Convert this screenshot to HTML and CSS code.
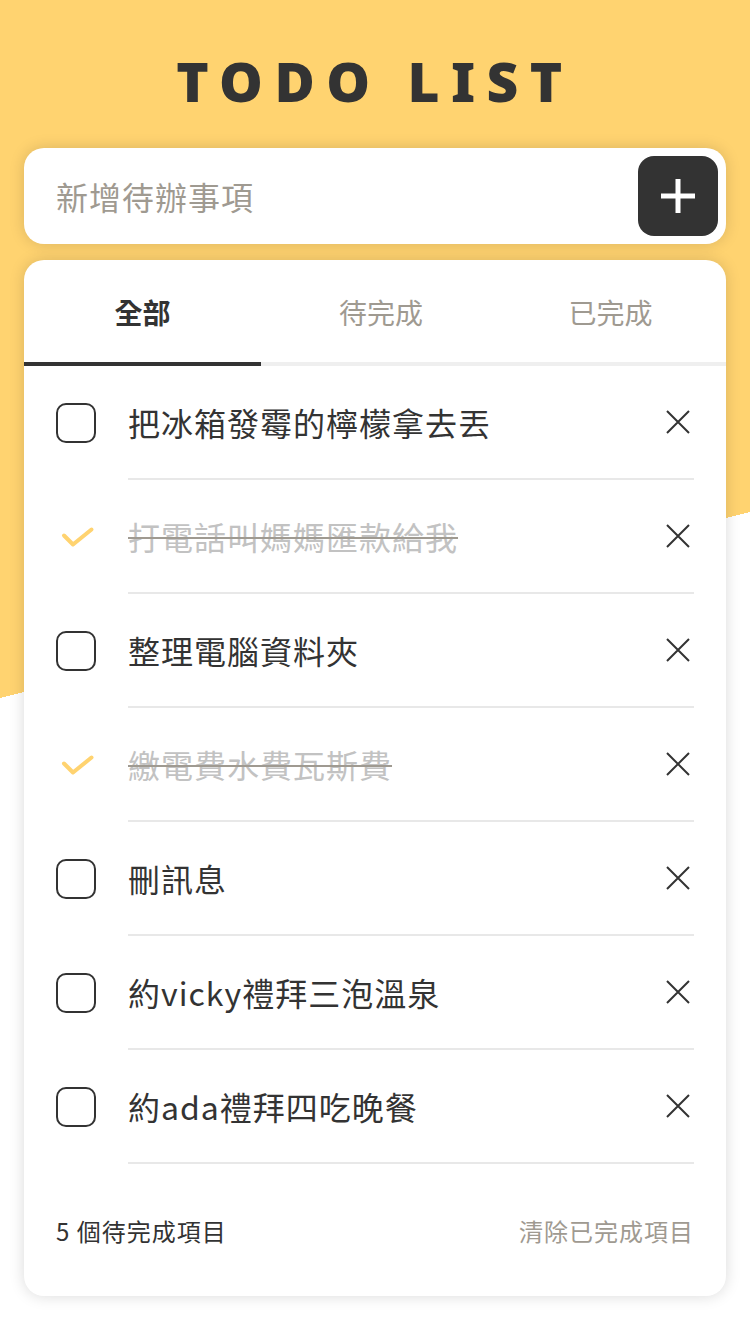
FILE: index.html
```html
<!DOCTYPE html>
<html lang="zh-Hant">
<head>
<meta charset="utf-8">
<title>TODO LIST</title>
<link rel="stylesheet" href="styles.css">
</head>
<body>
<div class="page">
  <header class="header">
    <h1 class="title">TODO LIST</h1>
  </header>
  <main class="content">
    <form class="add-bar">
      <input class="add-input" type="text" placeholder="新增待辦事項">
      <button class="add-btn" type="button" aria-label="新增">
        <svg width="34" height="34" viewBox="0 0 34 34"><path d="M17 0V34M0 17H34" stroke="#fff" stroke-width="5" fill="none"/></svg>
      </button>
    </form>
    <section class="card">
      <ul class="tabs">
        <li class="tab tab-active">全部</li>
        <li class="tab tab-mid">待完成</li>
        <li class="tab tab-last">已完成</li>
      </ul>
      <ul class="list">
        <li class="item">
          <span class="box"></span>
          <div class="item-body"><span class="item-text">把冰箱發霉的檸檬拿去丟</span><button class="del" type="button" aria-label="刪除"><svg width="24" height="24" viewBox="0 0 24 24"><path d="M1 1L23 23M23 1L1 23" stroke="#333" stroke-width="2" fill="none"/></svg></button></div>
        </li>
        <li class="item item-done">
          <span class="box"><svg width="40" height="40" viewBox="0 0 40 40"><path d="M8 18.5L17 27.5L35.5 12.5" stroke="#FFD370" stroke-width="4" fill="none" stroke-linecap="round" stroke-linejoin="round"/></svg></span>
          <div class="item-body"><span class="item-text">打電話叫媽媽匯款給我</span><button class="del" type="button" aria-label="刪除"><svg width="24" height="24" viewBox="0 0 24 24"><path d="M1 1L23 23M23 1L1 23" stroke="#333" stroke-width="2" fill="none"/></svg></button></div>
        </li>
        <li class="item">
          <span class="box"></span>
          <div class="item-body"><span class="item-text">整理電腦資料夾</span><button class="del" type="button" aria-label="刪除"><svg width="24" height="24" viewBox="0 0 24 24"><path d="M1 1L23 23M23 1L1 23" stroke="#333" stroke-width="2" fill="none"/></svg></button></div>
        </li>
        <li class="item item-done">
          <span class="box"><svg width="40" height="40" viewBox="0 0 40 40"><path d="M8 18.5L17 27.5L35.5 12.5" stroke="#FFD370" stroke-width="4" fill="none" stroke-linecap="round" stroke-linejoin="round"/></svg></span>
          <div class="item-body"><span class="item-text">繳電費水費瓦斯費</span><button class="del" type="button" aria-label="刪除"><svg width="24" height="24" viewBox="0 0 24 24"><path d="M1 1L23 23M23 1L1 23" stroke="#333" stroke-width="2" fill="none"/></svg></button></div>
        </li>
        <li class="item">
          <span class="box"></span>
          <div class="item-body"><span class="item-text">刪訊息</span><button class="del" type="button" aria-label="刪除"><svg width="24" height="24" viewBox="0 0 24 24"><path d="M1 1L23 23M23 1L1 23" stroke="#333" stroke-width="2" fill="none"/></svg></button></div>
        </li>
        <li class="item">
          <span class="box"></span>
          <div class="item-body"><span class="item-text">約vicky禮拜三泡溫泉</span><button class="del" type="button" aria-label="刪除"><svg width="24" height="24" viewBox="0 0 24 24"><path d="M1 1L23 23M23 1L1 23" stroke="#333" stroke-width="2" fill="none"/></svg></button></div>
        </li>
        <li class="item">
          <span class="box"></span>
          <div class="item-body"><span class="item-text">約ada禮拜四吃晚餐</span><button class="del" type="button" aria-label="刪除"><svg width="24" height="24" viewBox="0 0 24 24"><path d="M1 1L23 23M23 1L1 23" stroke="#333" stroke-width="2" fill="none"/></svg></button></div>
        </li>
      </ul>
      <div class="footer">
        <span class="count">5 個待完成項目</span>
        <a class="clear" href="#">清除已完成項目</a>
      </div>
    </section>
  </main>
</div>
</body>
</html>
```

FILE: styles.css
```css
* {
  box-sizing: border-box;
}

html, body {
  margin: 0;
  padding: 0;
}

body {
  font-family: "Noto Sans CJK TC", "Noto Sans", sans-serif;
  color: #333;
}

.page {
  min-height: 100vh;
  background: linear-gradient(166.07deg, #FFD370 677.5px, #FFFFFF 677.5px) top left / 750px 1334px no-repeat, #FFFFFF;
  padding: 0 24px;
}

.header {
  height: 148px;
  display: flex;
  align-items: center;
  justify-content: center;
  padding-top: 12px;
}

.title {
  margin: 0;
  font-family: "Noto Sans", sans-serif;
  font-weight: 900;
  font-size: 55px;
  line-height: 1;
  letter-spacing: 11.5px;
  color: #333;
}

.add-bar {
  display: flex;
  align-items: center;
  height: 96px;
  padding: 8px;
  background: #fff;
  border-radius: 20px;
  box-shadow: 0 0 15px rgba(0, 0, 0, 0.15);
  margin: 0 0 16px;
}

.add-input {
  flex: 1;
  min-width: 0;
  height: 100%;
  border: none;
  outline: none;
  background: transparent;
  padding: 0 0 0 24px;
  font-family: "Noto Sans CJK TC", sans-serif;
  font-size: 32px;
  letter-spacing: 1px;
  color: #333;
}

.add-input::placeholder {
  color: #9F9A91;
}

.add-btn {
  width: 80px;
  height: 80px;
  border: none;
  border-radius: 16px;
  background: #333;
  display: flex;
  align-items: center;
  justify-content: center;
  padding: 0;
}

.card {
  background: #fff;
  border-radius: 20px;
  box-shadow: 0 0 15px rgba(0, 0, 0, 0.15);
  overflow: hidden;
}

.tabs {
  list-style: none;
  margin: 0;
  padding: 0;
  display: flex;
}

.tab {
  flex: 0 0 237px;
  height: 106px;
  display: flex;
  align-items: center;
  justify-content: center;
  padding-top: 2px;
  font-size: 28px;
  color: #9F9A91;
  border-bottom: 4px solid #EFEFEF;
}

.tab-mid {
  flex-basis: 240px;
}

.tab-last {
  flex: 1 1 auto;
  padding-right: 6px;
}

.tab-active {
  color: #333;
  font-weight: 700;
  border-bottom-color: #333;
}

.list {
  list-style: none;
  margin: 0;
  padding: 0 32px 0 32px;
}

.item {
  display: flex;
  align-items: center;
  gap: 32px;
  height: 114px;
}

.box {
  flex: 0 0 40px;
  width: 40px;
  height: 40px;
  border: 2px solid #333;
  border-radius: 10px;
  display: flex;
}

.item-done .box {
  border: none;
}

.item-body {
  flex: 1;
  height: 100%;
  display: flex;
  align-items: center;
  justify-content: space-between;
  border-bottom: 2px solid #E8E8E8;
  padding: 0 4px 0 0;
}

.item-text {
  font-size: 32px;
  letter-spacing: 1px;
  color: #333;
}

.item-done .item-text {
  color: #C2C2C2;
  text-decoration: line-through;
  text-decoration-color: #9F9A91;
  text-decoration-thickness: 2px;
}

.del {
  border: none;
  background: none;
  padding: 0;
  width: 24px;
  height: 24px;
  display: flex;
}

.footer {
  height: 132px;
  display: flex;
  align-items: center;
  justify-content: space-between;
  padding: 0 32px;
  font-size: 24px;
  letter-spacing: 1px;
}

.count {
  color: #333;
}

.clear {
  color: #9F9A91;
  text-decoration: none;
}
```
